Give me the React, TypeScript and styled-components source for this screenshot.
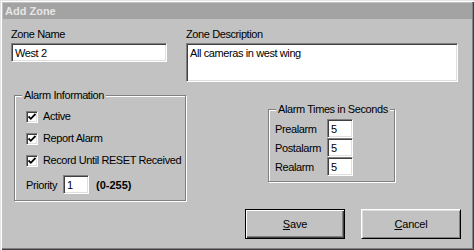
import { createGlobalStyle } from 'styled-components';
import styled from 'styled-components';

const GlobalStyle = createGlobalStyle`
  html, body {
    margin: 0;
    padding: 0;
    background: #c2c2c2;
  }
  * {
    box-sizing: border-box;
  }
`;

const Window = styled.div`
  width: 474px;
  height: 250px;
  background: #c2c2c2;
  display: flex;
  flex-direction: column;
  font-family: 'Liberation Sans', Arial, sans-serif;
  font-size: 11px;
  letter-spacing: -0.4px;
  color: #000;
  box-shadow: inset 1px 1px 0 #e4e4e4, inset 2px 2px 0 #ffffff,
    inset -1px -1px 0 #404040, inset -2px -2px 0 #808080;
`;

const TitleBar = styled.div`
  height: 16px;
  margin: 3px 2px 0 3px;
  background: #a3a3a3;
  color: #e6e6e6;
  font-weight: bold;
  letter-spacing: 0;
  line-height: 16px;
  padding-left: 2px;
`;

const Content = styled.div`
  display: flex;
  flex-direction: column;
  padding: 9px 13px 0 11px;
`;

const TopRow = styled.div`
  display: flex;
  gap: 19px;
`;

const Field = styled.div<{ $width: number }>`
  display: flex;
  flex-direction: column;
  width: ${(p) => p.$width}px;
`;

const Label = styled.label`
  line-height: 13px;
  height: 13px;
  margin-bottom: 2px;
  white-space: nowrap;
`;

const sunken = `
  background: #fff;
  border: 1px solid;
  border-color: #808080 #fff #fff #808080;
  box-shadow: inset 1px 1px 0 #404040, inset -1px -1px 0 #dfdfdf;
  font-family: 'Liberation Sans', Arial, sans-serif;
  font-size: 11px;
  letter-spacing: -0.4px;
  color: #000;
  outline: none;
`;

const TextBox = styled.input<{ $width?: number }>`
  ${sunken}
  width: ${(p) => (p.$width ? `${p.$width}px` : '100%')};
  height: 19px;
  padding: 1px 3px 0;
`;

const TextArea = styled.textarea`
  ${sunken}
  width: 100%;
  height: 39px;
  resize: none;
  padding: 3px 3px;
  line-height: 13px;
  overflow: hidden;
`;

const MiddleRow = styled.div`
  display: flex;
  align-items: flex-start;
  margin: 13px 0 0 3px;
`;

const GroupBox = styled.div<{ $width: number; $height: number; $top?: number }>`
  position: relative;
  width: ${(p) => p.$width}px;
  height: ${(p) => p.$height}px;
  margin-top: ${(p) => p.$top ?? 0}px;
  border: 1px solid #808080;
  box-shadow: 1px 1px 0 #fff, inset 1px 1px 0 #fff;
  display: flex;
  flex-direction: column;
`;

const Legend = styled.span`
  position: absolute;
  top: -7px;
  left: 7px;
  padding: 0 2px;
  background: #c2c2c2;
  line-height: 13px;
  white-space: nowrap;
`;

const CheckList = styled.div`
  display: flex;
  flex-direction: column;
  gap: 9px;
  padding: 14px 0 0 11px;
`;

const CheckRow = styled.label`
  display: flex;
  align-items: center;
  gap: 4px;
  height: 13px;
  line-height: 13px;
  white-space: nowrap;
`;

const CheckBox = styled.span`
  width: 12px;
  height: 12px;
  flex: none;
  ${sunken}
  display: flex;
  align-items: center;
  justify-content: center;
  margin-right: 1px;
`;

const PriorityRow = styled.div`
  display: flex;
  align-items: center;
  padding: 8px 0 0 11px;
  white-space: nowrap;
`;

const PriorityLabel = styled.span`
  width: 37px;
`;

const Range = styled.span`
  font-weight: bold;
  letter-spacing: 0;
  margin-left: 7px;
`;

const TimesGroupSpacer = styled.div`
  width: 82px;
`;

const TimeList = styled.div`
  display: flex;
  flex-direction: column;
  padding: 9px 0 0 6px;
`;

const TimeRow = styled.div`
  display: flex;
  align-items: center;
  height: 19px;
  & + & {
    margin-top: 0;
  }
`;

const TimeLabel = styled.span`
  width: 52px;
`;

const ButtonRow = styled.div`
  display: flex;
  justify-content: flex-end;
  gap: 16px;
  margin-top: 8px;
`;

const Button = styled.button<{ $default?: boolean }>`
  width: 100px;
  height: 30px;
  background: #c2c2c2;
  font-family: 'Liberation Sans', Arial, sans-serif;
  font-size: 11px;
  letter-spacing: -0.2px;
  color: #000;
  padding: 0;
  border: 1px solid;
  border-color: ${(p) => (p.$default ? '#000' : '#fff #000 #000 #fff')};
  box-shadow: ${(p) =>
    p.$default
      ? 'inset 1px 1px 0 #fff, inset -1px -1px 0 #404040, inset -2px -2px 0 #808080'
      : 'inset 1px 1px 0 #dfdfdf, inset -1px -1px 0 #808080'};
  & u {
    text-decoration: underline;
  }
`;

const Check = () => (
  <svg width="8" height="8" viewBox="0 0 8 8">
    <path d="M0.5 3.5 L2.8 5.8 L7.5 1" stroke="#000" strokeWidth="1.8" fill="none" />
  </svg>
);

const times = ['Prealarm', 'Postalarm', 'Realarm'];
const checks = ['Active', 'Report Alarm', 'Record Until RESET Received'];

export default function App() {
  return (
    <>
      <GlobalStyle />
      <Window>
        <TitleBar>Add Zone</TitleBar>
        <Content>
          <TopRow>
            <Field $width={156}>
              <Label>Zone Name</Label>
              <TextBox defaultValue="West 2" />
            </Field>
            <Field $width={272}>
              <Label>Zone Description</Label>
              <TextArea defaultValue="All cameras in west wing" />
            </Field>
          </TopRow>
          <MiddleRow>
            <GroupBox $width={172} $height={106}>
              <Legend>Alarm Information</Legend>
              <CheckList>
                {checks.map((c) => (
                  <CheckRow key={c}>
                    <CheckBox>
                      <Check />
                    </CheckBox>
                    {c}
                  </CheckRow>
                ))}
              </CheckList>
              <PriorityRow>
                <PriorityLabel>Priority</PriorityLabel>
                <TextBox $width={26} defaultValue="1" />
                <Range>(0-255)</Range>
              </PriorityRow>
            </GroupBox>
            <TimesGroupSpacer />
            <GroupBox $width={127} $height={73} $top={14}>
              <Legend>Alarm Times in Seconds</Legend>
              <TimeList>
                {times.map((t) => (
                  <TimeRow key={t}>
                    <TimeLabel>{t}</TimeLabel>
                    <TextBox $width={26} defaultValue="5" />
                  </TimeRow>
                ))}
              </TimeList>
            </GroupBox>
          </MiddleRow>
          <ButtonRow>
            <Button $default>
              <u>S</u>ave
            </Button>
            <Button>
              <u>C</u>ancel
            </Button>
          </ButtonRow>
        </Content>
      </Window>
    </>
  );
}
